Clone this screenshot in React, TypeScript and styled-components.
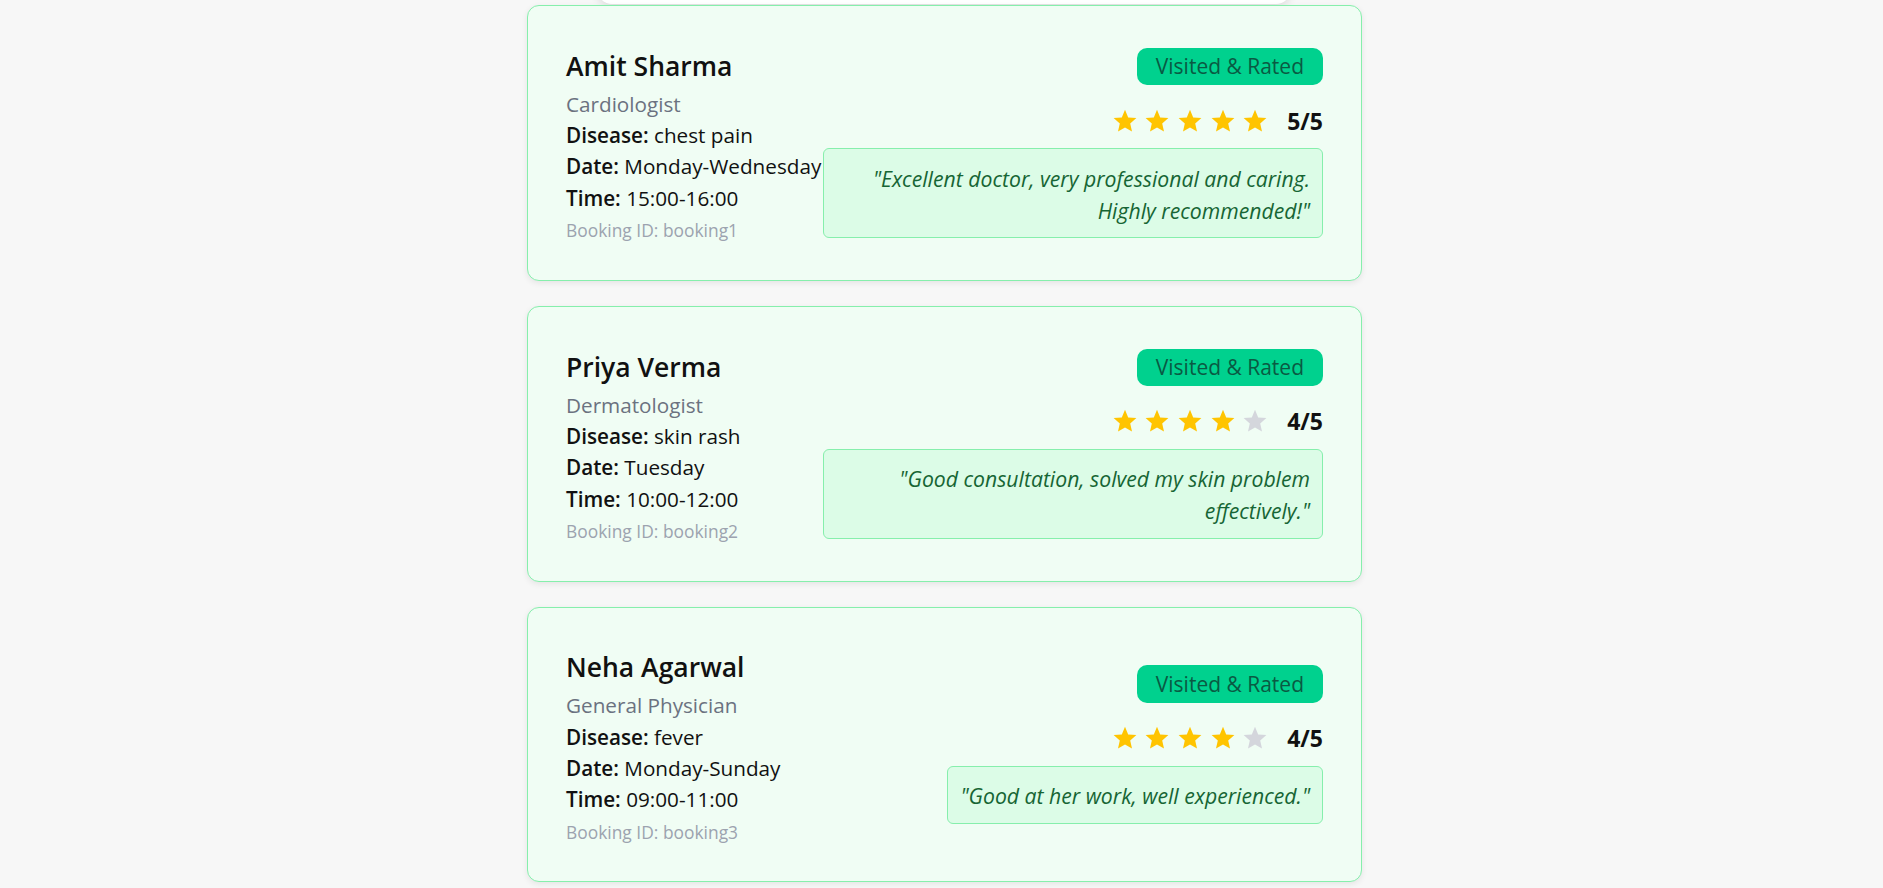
import React from "react";
import styled, { createGlobalStyle } from "styled-components";

const GlobalStyle = createGlobalStyle`
  html, body {
    margin: 0;
    padding: 0;
    background: #f7f7f7;
    font-family: "Segoe UI", "Open Sans", "Noto Sans", sans-serif;
    color: #111827;
  }
  * { box-sizing: border-box; }
`;

const Page = styled.div`
  padding-left: 6px;
  overflow: hidden;
  height: 888px;
`;

const Column = styled.div`
  width: 835px;
  margin: 0 auto;
  display: flex;
  flex-direction: column;
`;

const HeaderStub = styled.div`
  height: 30px;
  margin: -26px 71px 1px 70px;
  background: #ffffff;
  border-radius: 18px;
  box-shadow: 0 2px 8px rgba(0, 0, 0, 0.12);
`;

const List = styled.div`
  display: flex;
  flex-direction: column;
  gap: 25px;
`;

const Card = styled.div`
  display: flex;
  align-items: center;
  justify-content: space-between;
  padding: 38.9px 38px 38.7px;
  background: #f0fdf4;
  border: 1px solid #86efac;
  border-radius: 12px;
  box-shadow: 0 2px 6px rgba(0, 0, 0, 0.08);
`;

const Left = styled.div`
  flex: 1 1 auto;
  min-width: 0;
  display: flex;
  flex-direction: column;
`;

const Name = styled.h3`
  margin: 0 0 2px;
  font-size: 26.5px;
  line-height: 42px;
  font-weight: 600;
  color: #111111;
`;

const Specialty = styled.div`
  font-size: 20.7px;
  line-height: 31.3px;
  color: #6b7280;
`;

const Detail = styled.div`
  font-size: 20.7px;
  line-height: 31.3px;
  color: #111111;
  white-space: nowrap;
`;

const Label = styled.span`
  font-weight: 600;
`;

const BookingId = styled.div`
  margin-top: 5px;
  font-size: 17.4px;
  line-height: 22px;
  color: #9ca3af;
`;

const Right = styled.div`
  flex: 0 0 500px;
  display: flex;
  flex-direction: column;
  align-items: flex-end;
`;

const Badge = styled.span`
  display: inline-block;
  padding: 4.7px 19px;
  margin-bottom: 19.5px;
  background: #00d18e;
  color: #0a5a43;
  border-radius: 10px;
  font-size: 21px;
  line-height: 28px;
`;

const StarsRow = styled.div`
  display: flex;
  align-items: center;
  height: 32px;
  margin-bottom: 11.5px;
`;

const StarIcon = styled.svg<{ $on: boolean }>`
  width: 24px;
  height: 24px;
  margin-right: 8.6px;
  fill: ${(p) => (p.$on ? "#ffc400" : "#d4d6dc")};
  &:last-of-type {
    margin-right: 20px;
  }
`;

const Score = styled.span`
  font-size: 23px;
  font-weight: 700;
  color: #111111;
  line-height: 32px;
`;

const Review = styled.div`
  max-width: 100%;
  padding: 13.5px 12px 10.5px;
  background: #dcfce7;
  border: 1px solid #86efac;
  border-radius: 6px;
  color: #166534;
  font-style: italic;
  font-size: 21.2px;
  line-height: 32px;
  text-align: right;
`;

type Booking = {
  name: string;
  specialty: string;
  disease: string;
  date: string;
  time: string;
  id: string;
  rating: number;
  review: string;
};

const bookings: Booking[] = [
  {
    name: "Amit Sharma",
    specialty: "Cardiologist",
    disease: "chest pain",
    date: "Monday-Wednesday",
    time: "15:00-16:00",
    id: "booking1",
    rating: 5,
    review: "Excellent doctor, very professional and caring. Highly recommended!",
  },
  {
    name: "Priya Verma",
    specialty: "Dermatologist",
    disease: "skin rash",
    date: "Tuesday",
    time: "10:00-12:00",
    id: "booking2",
    rating: 4,
    review: "Good consultation, solved my skin problem effectively.",
  },
  {
    name: "Neha Agarwal",
    specialty: "General Physician",
    disease: "fever",
    date: "Monday-Sunday",
    time: "09:00-11:00",
    id: "booking3",
    rating: 4,
    review: "Good at her work, well experienced.",
  },
];

const Star = ({ on }: { on: boolean }) => (
  <StarIcon $on={on} viewBox="0 0 24 24" aria-hidden="true">
    <polygon points="12,0.8 15.2,8.4 23.4,9.1 17.2,14.5 19,22.6 12,18.4 5,22.6 6.8,14.5 0.6,9.1 8.8,8.4" />
  </StarIcon>
);

const BookingCard = ({ b }: { b: Booking }) => (
  <Card>
    <Left>
      <Name>{b.name}</Name>
      <Specialty>{b.specialty}</Specialty>
      <Detail>
        <Label>Disease:</Label> {b.disease}
      </Detail>
      <Detail>
        <Label>Date:</Label> {b.date}
      </Detail>
      <Detail>
        <Label>Time:</Label> {b.time}
      </Detail>
      <BookingId>Booking ID: {b.id}</BookingId>
    </Left>
    <Right>
      <Badge>Visited &amp; Rated</Badge>
      <StarsRow>
        {[1, 2, 3, 4, 5].map((i) => (
          <Star key={i} on={i <= b.rating} />
        ))}
        <Score>{b.rating}/5</Score>
      </StarsRow>
      <Review>"{b.review}"</Review>
    </Right>
  </Card>
);

export default function App() {
  return (
    <>
      <GlobalStyle />
      <Page>
        <Column>
          <HeaderStub />
          <List>
            {bookings.map((b) => (
              <BookingCard key={b.id} b={b} />
            ))}
          </List>
        </Column>
      </Page>
    </>
  );
}
